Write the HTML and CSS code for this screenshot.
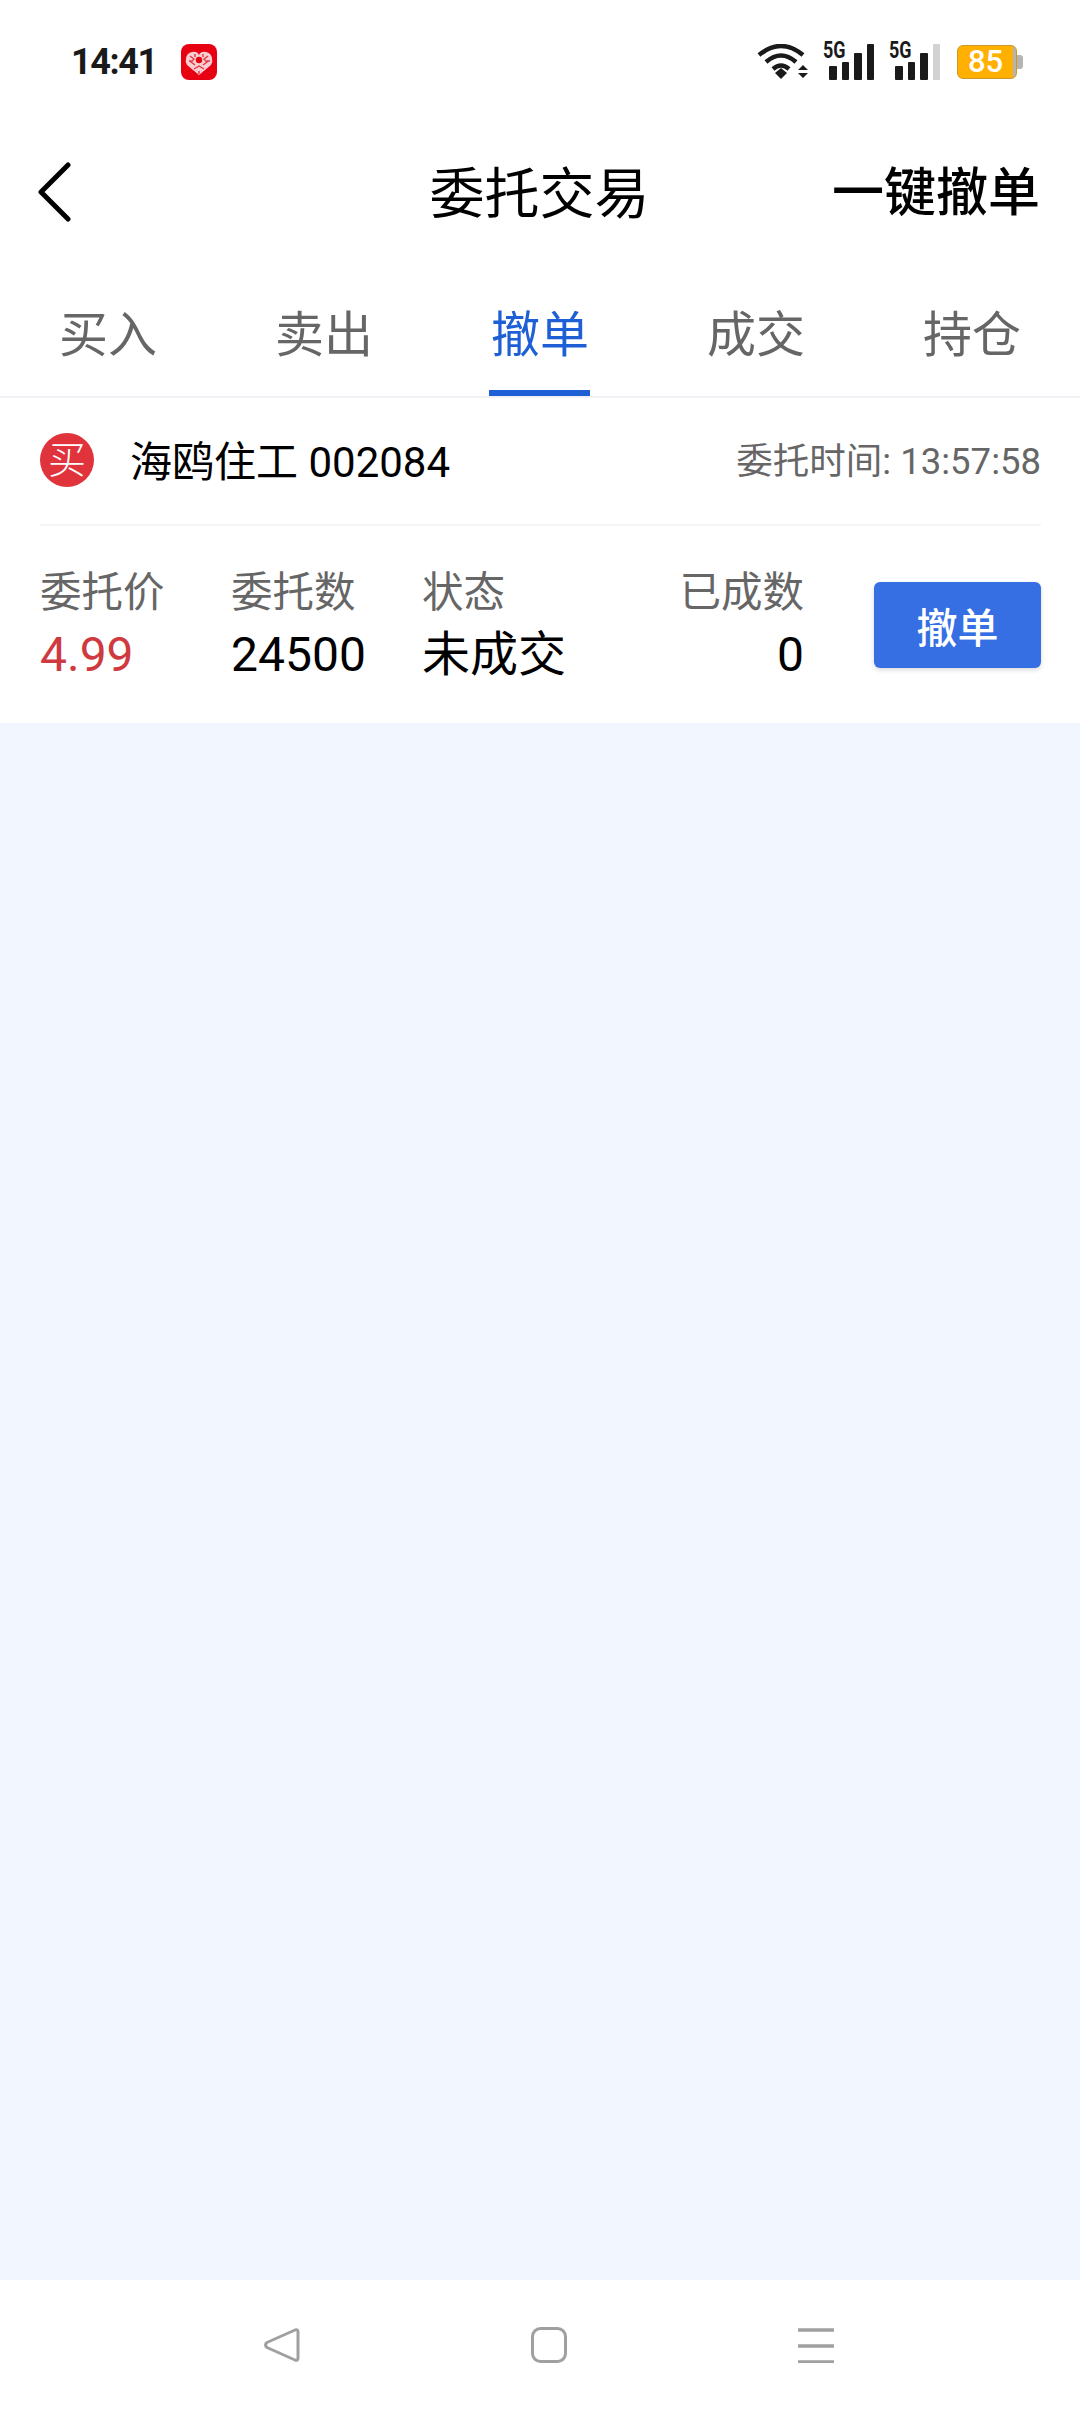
FILE: index.html
```html
<!DOCTYPE html>
<html lang="zh-CN">
<head>
  <meta charset="UTF-8" />
  <meta name="viewport" content="width=device-width, initial-scale=1.0"/>
  <title>委托交易</title>
  <link rel="stylesheet" href="styles.css">
</head>
<body>
  <div class="statusbar">
    <div class="status-left">
      <span class="clock">14:41</span>
      <svg class="app-icon" width="36" height="36" viewBox="0 0 36 36">
        <rect width="36" height="36" rx="8" fill="#e60012"/>
        <path d="M18 31 L6 21 Q4 18 5 14 Q6 9 11 8 Q16 7 18 11 Q20 7 25 8 Q30 9 31 14 Q32 18 30 21 Z" fill="#f7cfd2"/>
        <path d="M9 12 l4 3 -3 3 4 3 M27 12 l-4 3 3 3 -4 3 M13 25 l5 -3 5 3 M18 27 v3 M8 17 h2 M26 17 h3 M14 10 v3 M22 10 v3" stroke="#e8323e" stroke-width="1.4" fill="none"/>
        <circle cx="18" cy="16" r="3.2" fill="#e60012"/>
      </svg>
    </div>
    <div class="status-right">
      <svg width="51" height="36" viewBox="0 0 51 36">
        <path d="M2 11 Q24 -7 46 11" stroke="#1a1a1a" stroke-width="4.4" fill="none"/>
        <path d="M9 18 Q24 5 39 18" stroke="#1a1a1a" stroke-width="4.4" fill="none"/>
        <path d="M16 25 Q24 18 32 25" stroke="#1a1a1a" stroke-width="4.4" fill="none"/>
        <path d="M18 29 L24 24 L30 29 L24 35 Z" fill="#1a1a1a"/>
        <path d="M41 26 L46 21 L51 26 Z M41 29 L51 29 L46 34 Z" fill="#1a1a1a"/>
      </svg>
      <div class="signal">
        <span class="net">5G</span>
        <i class="bar b1"></i><i class="bar b2"></i><i class="bar b3"></i><i class="bar b4"></i>
      </div>
      <div class="signal">
        <span class="net">5G</span>
        <i class="bar b1"></i><i class="bar b2"></i><i class="bar b3"></i><i class="bar b4 off"></i>
      </div>
      <div class="battery">
        <div class="battery-body">85</div>
        <i class="battery-tip"></i>
      </div>
    </div>
  </div>

  <header class="topbar">
    <svg class="back" width="38" height="60" viewBox="0 0 38 60">
      <path d="M32 3 L5 30 L32 57" stroke="#000" stroke-width="5" fill="none" stroke-linecap="round" stroke-linejoin="round"/>
    </svg>
    <h1>委托交易</h1>
    <a class="cancel-all" href="#">一键撤单</a>
  </header>

  <nav class="tabs">
    <a href="#">买入</a>
    <a href="#">卖出</a>
    <a href="#" class="active">撤单</a>
    <a href="#">成交</a>
    <a href="#">持仓</a>
  </nav>

  <section class="order">
    <div class="order-head">
      <span class="badge">买</span>
      <span class="stock">海鸥住工 002084</span>
      <span class="time">委托时间: 13:57:58</span>
    </div>
    <div class="order-body">
      <div class="cell c-price">
        <label>委托价</label>
        <b class="red">4.99</b>
      </div>
      <div class="cell c-count">
        <label>委托数</label>
        <b>24500</b>
      </div>
      <div class="cell c-state">
        <label>状态</label>
        <b>未成交</b>
      </div>
      <div class="cell c-done">
        <label>已成数</label>
        <b>0</b>
      </div>
      <button class="cancel-btn">撤单</button>
    </div>
  </section>

  <main class="empty"></main>

  <footer class="navkeys">
    <svg width="36" height="36" viewBox="0 0 36 36">
      <path d="M31 3 Q34 2 34 5 L34 31 Q34 34 31 33 L3 20.5 Q0 18 3 15.5 Z" stroke="#a0a0a0" stroke-width="3" fill="none" stroke-linejoin="round"/>
    </svg>
    <svg width="36" height="36" viewBox="0 0 36 36">
      <rect x="1.5" y="1.5" width="33" height="33" rx="8" stroke="#a0a0a0" stroke-width="3" fill="none"/>
    </svg>
    <svg width="36" height="36" viewBox="0 0 36 36">
      <path d="M0 3 H36 M0 19 H36 M0 35 H36" stroke="#a0a0a0" stroke-width="3.4" fill="none"/>
    </svg>
  </footer>
</body>
</html>
```

FILE: styles.css
```css
:root {
  --blue: #1f5fd6;
  --btn-blue: #356fe3;
  --red: #cf3a40;
  --gray: #666;
  --page: #f2f6fe;
}

* {
  box-sizing: border-box;
}

html, body {
  height: 100%;
}

body {
  margin: 0;
  display: flex;
  flex-direction: column;
  background: #fff;
  color: #000;
  font-family: Roboto, "Noto Sans CJK SC", sans-serif;
}

/* status bar */
.statusbar {
  height: 124px;
  flex: none;
  display: flex;
  justify-content: space-between;
  align-items: center;
  padding: 0 57px 0 71px;
}

.status-left, .status-right {
  display: flex;
  align-items: center;
}

.clock {
  font-size: 36px;
  font-weight: 700;
  letter-spacing: -1.4px;
  color: #1a1a1a;
  width: 110px;
}

.status-right {
  gap: 15px;
}

.signal {
  position: relative;
  width: 51px;
  height: 36px;
  display: flex;
  align-items: flex-end;
  gap: 5px;
  padding-left: 6px;
}

.net {
  position: absolute;
  left: 0;
  top: -6px;
  font-size: 23px;
  line-height: 26px;
  font-weight: 700;
  color: #1a1a1a;
  transform: scaleX(0.78);
  transform-origin: left;
}

.bar {
  width: 7.5px;
  background: #1a1a1a;
  border-radius: 1px;
}

.b1 { height: 14px; }
.b2 { height: 18px; }
.b3 { height: 27px; }
.b4 { height: 36px; }
.off { background: #d2d2d2; }

.battery {
  display: flex;
  align-items: center;
  margin-left: 2px;
}

.battery-body {
  width: 60px;
  height: 34px;
  padding-right: 3px;
  background: linear-gradient(to right, #ffb000 55px, #b5b5b5 55px);
  border: 1px solid #c99a2a;
  border-radius: 6px;
  text-align: center;
  color: #fff;
  font-size: 31px;
  font-weight: 500;
  line-height: 32px;
}

.battery-tip {
  width: 6px;
  height: 14px;
  background: #b5b5b5;
  border-radius: 0 3px 3px 0;
}

/* title row */
.topbar {
  height: 129px;
  flex: none;
  display: grid;
  grid-template-columns: 1fr auto 1fr;
  align-items: center;
  padding: 0 40px 0 36px;
}

.back {
  margin-top: 6px;
}

.topbar h1 {
  margin: 0 0 0 3px;
  font-size: 55px;
  font-weight: 400;
}

.cancel-all {
  justify-self: end;
  font-size: 52px;
  font-weight: 500;
  color: #000;
  text-decoration: none;
}

/* tabs */
.tabs {
  height: 145px;
  flex: none;
  display: flex;
  border-bottom: 2px solid #eff1f4;
  padding-top: 44px;
}

.tabs a {
  flex: 1;
  text-align: center;
  font-size: 49px;
  color: var(--gray);
  text-decoration: none;
  line-height: 78px;
  position: relative;
}

.tabs a.active {
  color: var(--blue);
}

.tabs a.active::after {
  content: '';
  position: absolute;
  left: 50%;
  bottom: 0;
  width: 101px;
  height: 6px;
  margin-left: -51px;
  background: var(--blue);
}

/* order card */
.order {
  padding: 0 39px 0 40px;
  height: 325px;
  flex: none;
}

.order-head {
  height: 128px;
  padding-bottom: 2px;
  display: flex;
  align-items: center;
  border-bottom: 2px solid #f4f5f7;
}

.badge {
  width: 54px;
  height: 54px;
  border-radius: 50%;
  background: #e0333c;
  color: #fff;
  font-size: 38px;
  line-height: 54px;
  text-align: center;
  margin-right: 36px;
  font-weight: 300;
}

.stock {
  font-size: 42px;
  margin-bottom: 3px;
}

.time {
  margin-left: auto;
  margin-bottom: 3px;
  font-size: 36.5px;
  color: var(--gray);
}

.order-body {
  display: flex;
  align-items: flex-start;
  padding-top: 38px;
}

.cell {
  display: flex;
  flex-direction: column;
}

.cell label {
  font-size: 41.5px;
  line-height: 58px;
  color: var(--gray);
}

.cell b {
  font-size: 48px;
  font-weight: 400;
  line-height: 66px;
}

.cell b.red {
  color: var(--red);
}

.c-price { width: 191px; }
.c-count { width: 191px; }
.c-state { width: 193px; }

.c-done {
  width: 189px;
  text-align: right;
}

.cancel-btn {
  width: 167px;
  height: 86px;
  margin: 18px 0 0 auto;
  background: var(--btn-blue);
  color: #fff;
  border: none;
  border-radius: 6px;
  font-family: inherit;
  font-size: 41px;
  font-weight: 500;
  box-shadow: 0 2px 5px rgba(0,0,0,0.15);
}

/* empty list area */
.empty {
  flex: 1;
  background: var(--page);
}

/* android keys */
.navkeys {
  height: 132px;
  flex: none;
  display: flex;
  align-items: flex-start;
  justify-content: center;
  gap: 231px;
  padding: 47px 0 0 18px;
}
```
